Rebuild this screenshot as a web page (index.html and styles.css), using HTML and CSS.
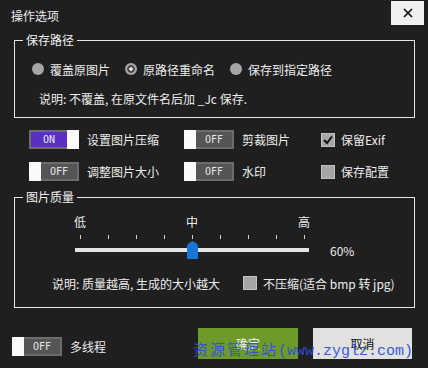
FILE: index.html
```html
<!doctype html>
<html>

<head>
	<meta charset="utf-8">
	<link rel="stylesheet" href="styles.css">
	<title>操作选项</title>
</head>

<body>
	<div class="dialog">
		<div class="titlebar">
			<span class="title">操作选项</span>
			<span class="close">
				<svg width="10" height="10" viewBox="0 0 10 10"><path d="M1 1L9 9M9 1L1 9" stroke="#111" stroke-width="1.7" /></svg>
			</span>
		</div>

		<fieldset class="group">
			<legend>保存路径</legend>
			<div class="radios">
				<label class="radio"><span class="dot"></span>覆盖原图片</label>
				<label class="radio"><span class="dot checked"></span>原路径重命名</label>
				<label class="radio"><span class="dot"></span>保存到指定路径</label>
			</div>
			<div class="desc">说明: 不覆盖, 在原文件名后加 _Jc 保存.</div>
		</fieldset>

		<div class="options">
			<div class="opt">
				<span class="toggle on"><span class="track">ON</span><span class="knob"></span></span>设置图片压缩
			</div>
			<div class="opt">
				<span class="toggle"><span class="knob"></span><span class="track">OFF</span></span>剪裁图片
			</div>
			<div class="opt check">
				<span class="box"><svg width="12" height="12" viewBox="0 0 12 12"><path d="M2 6L5 9L10 2.5" fill="none" stroke="#111" stroke-width="2" /></svg></span>保留Exif
			</div>
			<div class="opt">
				<span class="toggle"><span class="knob"></span><span class="track">OFF</span></span>调整图片大小
			</div>
			<div class="opt">
				<span class="toggle"><span class="knob"></span><span class="track">OFF</span></span>水印
			</div>
			<div class="opt check">
				<span class="box"></span>保存配置
			</div>
		</div>

		<fieldset class="group quality">
			<legend>图片质量</legend>
			<div class="marks">
				<span>低</span><span>中</span><span>高</span>
			</div>
			<div class="ticks">
				<i></i><i></i><i></i><i></i><i></i><i></i><i></i><i></i><i></i>
			</div>
			<div class="sliderRow">
				<div class="slider">
					<div class="rail"></div>
					<svg class="thumb" width="11" height="18" viewBox="0 0 11 18"><path d="M0 6Q0 3 3 1.5L5.5 0L8 1.5Q11 3 11 6L11 18L0 18Z" fill="#1a76d6" /></svg>
				</div>
				<span class="pct">60%</span>
			</div>
			<div class="qdesc">
				<span class="qtext">说明: 质量越高, 生成的大小越大</span>
				<span class="opt check"><span class="box"></span>不压缩(适合 bmp 转 jpg)</span>
			</div>
		</fieldset>

		<div class="footer">
			<div class="opt thread">
				<span class="toggle"><span class="knob"></span><span class="track">OFF</span></span>多线程
			</div>
			<div class="buttons">
				<span class="btn ok">确定</span>
				<span class="btn cancel">取消</span>
			</div>
			<div class="watermark"><span class="wmcn">资源管理站</span>(www.zyglz.com)</div>
		</div>
	</div>
</body>

</html>
```

FILE: styles.css
```css
body {
	margin: 0;
	background: #1f1f1f;
	color: #ededed;
	font: 12px "Noto Sans CJK SC", "Microsoft YaHei", sans-serif;
}

.dialog {
	width: 428px;
	height: 368px;
	overflow: hidden;
}

.titlebar {
	display: flex;
	justify-content: space-between;
	align-items: flex-start;
	height: 26px;
}

.title {
	margin: 7px 0 0 11px;
	line-height: 18px;
}

.close {
	display: flex;
	align-items: center;
	justify-content: center;
	width: 33px;
	height: 24px;
	margin: 1px 4px 0 0;
	background: #f0f0f0;
}

.group {
	box-sizing: border-box;
	width: 401px;
	margin: 6px 0 0 14px;
	padding: 0 0 8px 0;
	border: 1px solid #e6e6e6;
	min-width: 0;
}

.group legend {
	margin-left: 8px;
	padding: 0 3px;
	line-height: 16px;
	color: #f2f2f2;
}

.radios {
	display: flex;
	align-items: center;
	gap: 15px;
	height: 20px;
	margin-top: 11px;
	padding-left: 17px;
}

.radio {
	display: flex;
	align-items: center;
	gap: 6px;
}

.dot {
	width: 12px;
	height: 12px;
	border-radius: 50%;
	background: #a6a6a6;
}

.dot.checked {
	background: radial-gradient(circle, #e8e8e8 0 1.5px, #4a4a4a 2px 3.5px, #a6a6a6 4px);
}

.desc {
	margin-top: 10px;
	padding-left: 24px;
	line-height: 20px;
}

.options {
	display: grid;
	grid-template-columns: 155px 137px auto;
	grid-auto-rows: 19px;
	row-gap: 13px;
	margin-top: 12px;
	padding-left: 29px;
}

.opt {
	display: flex;
	align-items: center;
	gap: 8px;
}

.opt.check {
	gap: 6px;
}

.toggle {
	display: flex;
	width: 50px;
	height: 19px;
}

.knob {
	width: 12px;
	background: #fafafa;
}

.track {
	flex: 1;
	display: flex;
	align-items: center;
	justify-content: center;
	border: 2px solid #6c6c6c;
	background: #555;
	color: #e6e6e6;
	font: 10px "DejaVu Sans Mono", monospace;
	transform-origin: center;
}

.toggle.on .track {
	background: #5a2fc6;
	border-right: none;
}

.toggle .knob + .track {
	border-left: none;
}

.box {
	box-sizing: border-box;
	display: flex;
	align-items: center;
	justify-content: center;
	width: 14px;
	height: 14px;
	background: #a6a6a6;
	border: 1px solid #c4c4c4;
}

.quality {
	margin-top: 8px;
	padding-bottom: 14px;
}

.marks {
	display: flex;
	justify-content: space-between;
	width: 236px;
	margin: 9px 0 0 59px;
	line-height: 16px;
}

.ticks {
	display: flex;
	justify-content: space-between;
	width: 225px;
	height: 4px;
	margin: 5px 0 0 65px;
}

.ticks i {
	width: 1px;
	background: #d0d0d0;
}

.sliderRow {
	display: flex;
	align-items: center;
	height: 20px;
	margin-top: 1px;
	padding-left: 60px;
}

.slider {
	position: relative;
	width: 234px;
	height: 20px;
	display: flex;
	align-items: center;
}

.rail {
	width: 100%;
	height: 4px;
	background: #e4e4e4;
}

.thumb {
	position: absolute;
	left: 112px;
	top: 1px;
}

.pct {
	margin-left: 21px;
}

.qdesc {
	display: grid;
	grid-template-columns: 191px auto;
	align-items: center;
	height: 20px;
	margin-top: 13px;
	padding-left: 37px;
}

.footer {
	position: relative;
	display: flex;
	justify-content: space-between;
	align-items: flex-start;
	margin-top: 20px;
	padding: 0 16px 0 12px;
}

.thread {
	margin-top: 9px;
}

.buttons {
	display: flex;
	gap: 15px;
}

.btn {
	display: flex;
	align-items: center;
	justify-content: center;
	width: 100px;
	height: 31px;
}

.ok {
	background: #6e9a2c;
	color: #f4f4f4;
}

.cancel {
	width: 99px;
	background: #e1e1e1;
	color: #111;
}

.watermark {
	position: absolute;
	left: 193px;
	top: 10px;
	color: #2f4fd8;
	font: 15px "Liberation Mono", "Noto Sans CJK SC", monospace;
	opacity: 0.92;
	white-space: nowrap;
}

.wmcn {
	font-family: "Noto Sans CJK SC", sans-serif;
	letter-spacing: 2px;
}
```
